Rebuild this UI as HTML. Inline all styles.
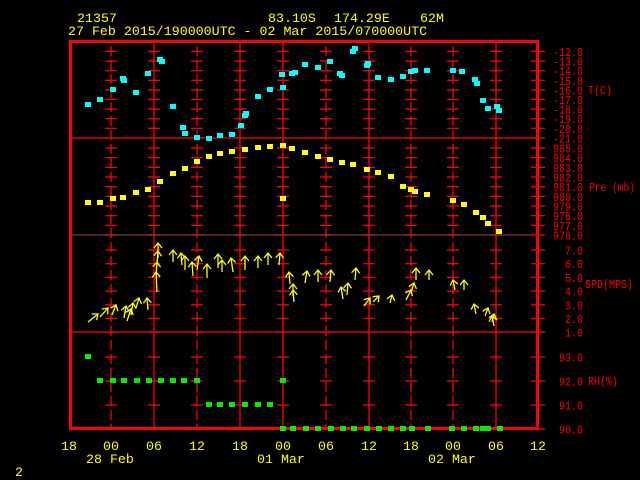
<!DOCTYPE html>
<html><head><meta charset="utf-8"><style>
html,body{margin:0;padding:0;background:#000;width:640px;height:480px;overflow:hidden}
svg{display:block}
text{font-family:"Liberation Mono",monospace}
</style></head><body>
<svg id="s" width="640" height="480" viewBox="0 0 640 480" xmlns="http://www.w3.org/2000/svg">
<rect width="640" height="480" fill="#000"/>
<g fill="#ffff00" font-size="13.3">
<text x="77" y="22">21357</text>
<text x="268" y="22">83.10S</text>
<text x="334" y="22">174.29E</text>
<text x="420" y="22">62M</text>
<text x="68" y="35">27 Feb 2015/190000UTC - 02 Mar 2015/070000UTC</text>
<text x="61" y="450">18</text><text x="103" y="450">00</text><text x="146" y="450">06</text>
<text x="189" y="450">12</text><text x="232" y="450">18</text><text x="275" y="450">00</text>
<text x="318" y="450">06</text><text x="361" y="450">12</text><text x="403" y="450">18</text>
<text x="445" y="450">00</text><text x="488" y="450">06</text><text x="530" y="450">12</text>
<text x="86" y="463">28 Feb</text><text x="257" y="463">01 Mar</text><text x="428" y="463">02 Mar</text>
<text x="15" y="476">2</text>
</g>
<g id="grid"></g>
<g id="data"></g>
<g fill="#ff0000" font-size="12" id="lab">
<text x="588" y="94" textLength="24" lengthAdjust="spacingAndGlyphs">T(C)</text>
<text x="589" y="191" textLength="46" lengthAdjust="spacingAndGlyphs">Pre (mb)</text>
<text x="585" y="288" textLength="48" lengthAdjust="spacingAndGlyphs">SPD(MPS)</text>
<text x="588" y="385" textLength="30" lengthAdjust="spacingAndGlyphs">RH(%)</text>
</g>
</svg>
<script>
var NS="http://www.w3.org/2000/svg";
function el(p,t,a,txt){var e=document.createElementNS(NS,t);for(var k in a)e.setAttribute(k,a[k]);if(txt!=null)e.textContent=txt;document.getElementById(p).appendChild(e);return e;}
var R="#ff0000";
var xs=[111,154,197,240,283,326,369,411,453,496];
var solid={154:1,240:1,283:1,369:1,496:1};
var T=[],P=[],S=[],H=[];
for(var i=0;i<10;i++){T.push(51.5+i*9.6);P.push(148+i*9.67);}
for(var i=0;i<7;i++)S.push(250+i*13.7);
for(var i=0;i<4;i++)H.push(357+i*24);
var all=T.concat(P,S,H);
xs.forEach(function(x){
 if(solid[x]) el("grid","line",{x1:x,y1:43,x2:x,y2:428,stroke:R,"stroke-width":1.3});
 else el("grid","line",{x1:x,y1:46,x2:x,y2:428,stroke:R,"stroke-width":1.3,"stroke-dasharray":"10,4"});
 all.forEach(function(y){el("grid","line",{x1:x-6,y1:y,x2:x+6,y2:y,stroke:R,"stroke-width":1.3});});
});
el("grid","line",{x1:70,y1:138,x2:538,y2:138,stroke:R,"stroke-width":1.3});
el("grid","line",{x1:70,y1:235,x2:538,y2:235,stroke:"#a04040","stroke-width":1});
el("grid","line",{x1:70,y1:332,x2:538,y2:332,stroke:R,"stroke-width":1.3});
el("grid","rect",{x:70.5,y:41.5,width:467,height:387,fill:"none",stroke:R,"stroke-width":3});
function lab(ys,vals){ys.forEach(function(y,i){el("grid","line",{x1:531,y1:y,x2:545,y2:y,stroke:R,"stroke-width":1.3});var v=vals[i];var w=v.length*6;el("lab","text",{x:583-w,y:y+4.5,textLength:w,lengthAdjust:"spacingAndGlyphs"},v);});}
lab(T,["-12.0","-13.0","-14.0","-15.0","-16.0","-17.0","-18.0","-19.0","-20.0","-21.0"]);
lab(P,["985.0","984.0","983.0","982.0","981.0","980.0","979.0","978.0","977.0","976.0"]);
lab(S,["7.0","6.0","5.0","4.0","3.0","2.0","1.0"]);
lab(H,["93.0","92.0","91.0","90.0"]);
var cy=[[88,105],[100,100],[113,90],[123,79],[124,81],[136,93],[148,74],[160,60],[162,62],[173,107],[183,128],[185,134],[197,138],[209,139],[220,136],[232,135],[241,126],[245,116],[246,114],[258,97],[270,90],[282,75],[283,88],[292,74],[295,73],[305,65],[318,68],[330,62],[340,74],[342,76],[353,52],[355,49],[367,66],[368,64],[378,78],[391,80],[403,77],[411,72],[415,71],[427,71],[453,71],[462,72],[475,80],[477,84],[483,101],[488,109],[497,107],[499,111]];
cy.forEach(function(p){el("data","rect",{x:p[0]-3,y:p[1]-3,width:6,height:5,fill:"#00ffff"});});
var yl=[[88,203],[100,203],[113,199],[123,198],[136,193],[148,190],[160,182],[173,174],[185,169],[197,162],[209,157],[220,154],[232,152],[245,150],[258,148],[270,147],[283,146],[292,149],[305,153],[318,157],[330,160],[342,163],[353,165],[367,170],[378,173],[391,177],[403,187],[411,190],[415,192],[427,195],[283,199],[453,201],[464,205],[476,213],[483,218],[488,224],[499,232]];
yl.forEach(function(p){el("data","rect",{x:p[0]-3,y:p[1]-3,width:6,height:5,fill:"#ffff00"});});
var g=[[88,357]];
[100,113,124,137,149,161,173,184,197,283].forEach(function(x){g.push([x,381]);});
[209,220,232,245,258,270].forEach(function(x){g.push([x,405]);});
[283,293,306,318,331,343,354,367,379,391,403,412,428,452,464,476,483,488,500].forEach(function(x){g.push([x,429]);});
g.forEach(function(p){el("data","rect",{x:p[0]-3,y:p[1]-3,width:6,height:5,fill:"#00ee00"});});
var w=[[88,322,10,-8],[100,317,8,-9],[112,315,4,-10],[124,318,2,-12],[127,321,4,-12],[131,315,2,-12],[136,308,3,-10],[148,310,-1,-12],[157,292,-1,-20],[156,276,1,-14],[157,265,1,-14],[158,258,0,-15],[173,262,0,-12],[182,265,-1,-12],[185,270,0,-14],[193,276,-1,-14],[197,270,2,-14],[207,278,0,-14],[218,268,0,-14],[222,272,0,-12],[233,272,-2,-14],[245,270,0,-14],[258,268,0,-12],[268,265,0,-12],[279,265,1,-12],[290,284,-1,-12],[293,296,0,-12],[294,302,-1,-12],[305,283,2,-12],[318,282,0,-12],[330,282,1,-12],[343,299,-2,-12],[347,295,1,-12],[355,280,1,-12],[364,306,6,-8],[373,302,6,-6],[390,303,2,-8],[406,300,5,-10],[411,293,3,-10],[416,280,0,-12],[429,280,0,-10],[455,290,-2,-10],[464,290,0,-10],[476,314,-2,-10],[485,316,3,-8],[492,322,2,-8],[494,326,-2,-10]];
w.forEach(function(a){
 var x=a[0],y=a[1],ex=x+a[2],ey=y+a[3];
 el("data","line",{x1:x,y1:y,x2:ex,y2:ey,stroke:"#ffff00","stroke-width":1.3});
 var L=Math.hypot(a[2],a[3]),ux=a[2]/L,uy=a[3]/L;
 var hx=ex-ux*5,hy=ey-uy*5;
 el("data","polyline",{points:(hx-uy*4)+","+(hy+ux*4)+" "+ex+","+ey+" "+(hx+uy*4)+","+(hy-ux*4),fill:"none",stroke:"#ffff00","stroke-width":1.3});
});
</script>
</body></html>
